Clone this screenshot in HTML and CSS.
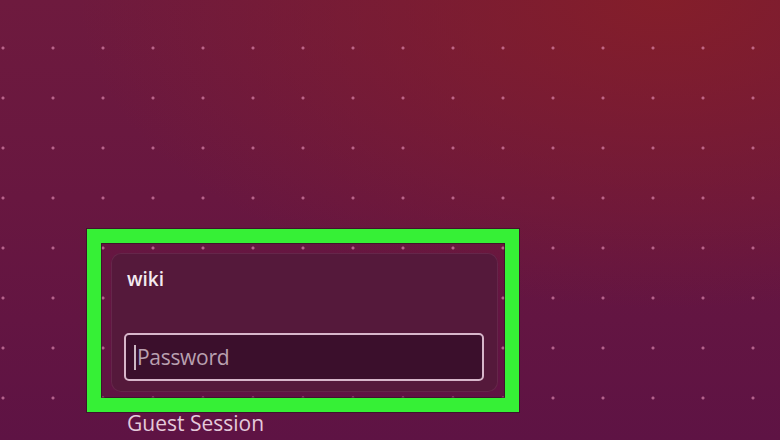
FILE: index.html
```html
<!DOCTYPE html>
<html lang="en">
<head>
  <meta charset="UTF-8" />
  <meta name="viewport" content="width=device-width, initial-scale=1.0"/>
  <title>Login</title>
  <link rel="stylesheet" href="styles.css">
</head>
<body>

  <div class="screen">
    <div class="highlight">
      <div class="login-box">
        <div class="username">wiki</div>
        <div class="password-field">
          <span class="caret"></span>
          <span class="placeholder">Password</span>
        </div>
      </div>
    </div>
    <div class="guest">Guest Session</div>
  </div>

</body>
</html>
```

FILE: styles.css
```css
body {
  margin: 0;
  font-family: "Open Sans", "Noto Sans", sans-serif;
  background: #601343;
}

.screen {
  width: 780px;
  height: 440px;
  box-sizing: border-box;
  padding: 229px 0 0 87px;
  overflow: hidden;
  background-color: #6a173f;
  background-image:
    radial-gradient(circle, rgba(236, 150, 190, 0.6) 1px, rgba(236, 150, 190, 0) 2px),
    radial-gradient(ellipse 75% 70% at 85% 0%, rgba(134, 30, 40, 0.9), rgba(134, 30, 40, 0) 100%),
    linear-gradient(180deg, #6e1a3e 0%, #681740 45%, #5e1344 100%);
  background-size: 50px 50px, 100% 100%, 100% 100%;
  background-position: 28px 23px, 0 0, 0 0;
}

.highlight {
  width: 404px;
  height: 155px;
  border: 14px solid #36f036;
  box-shadow: 0 0 0 1px rgba(50, 20, 35, 0.7), inset 0 0 0 1px rgba(50, 20, 35, 0.7);
}

.login-box {
  width: 387px;
  height: 139px;
  margin: 10px 0 0 10px;
  box-sizing: border-box;
  padding: 14px 0 0 13px;
  background: #55193b;
  border-radius: 10px;
  box-shadow: inset 0 0 0 1px rgba(150, 80, 120, 0.25);
}

.username {
  margin-left: 3px;
  font-size: 19px;
  font-weight: 600;
  line-height: 24px;
  color: #f3eaf0;
}

.password-field {
  display: flex;
  align-items: center;
  width: 360px;
  height: 48px;
  margin-top: 42px;
  box-sizing: border-box;
  padding-left: 8px;
  background: #3b0f2c;
  border: 2px solid #d7b6ca;
  border-radius: 5px;
}

.caret {
  width: 2px;
  height: 25px;
  background: #cdb8c4;
}

.placeholder {
  margin-left: 1px;
  font-size: 21px;
  letter-spacing: -0.3px;
  color: #b9a0b0;
}

.guest {
  margin: 1px 0 0 40px;
  font-size: 21px;
  line-height: 20px;
  color: #e4cadb;
}
```
